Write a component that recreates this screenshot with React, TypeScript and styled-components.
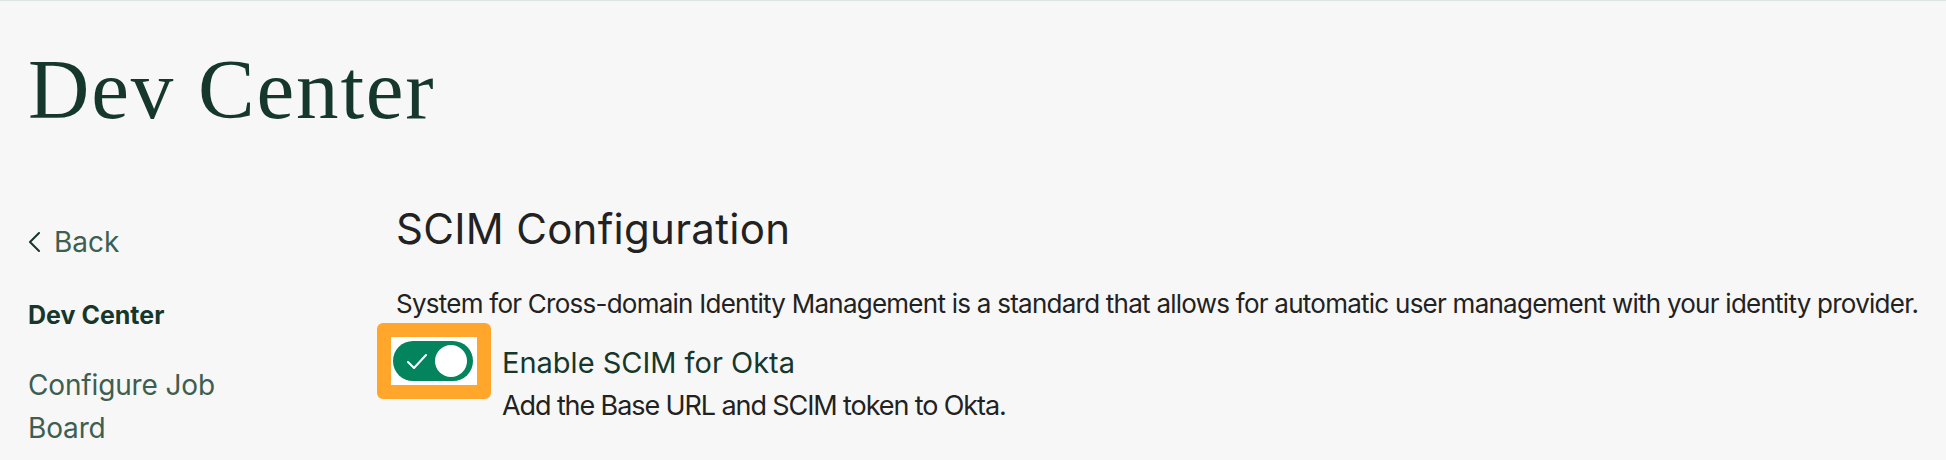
import React from 'react';
import styled, { createGlobalStyle } from 'styled-components';

const GlobalStyle = createGlobalStyle`
  html, body {
    margin: 0;
    padding: 0;
    background: #f7f7f7;
  }
  body {
    font-family: Inter, "Noto Sans", sans-serif;
  }
`;

const Page = styled.div`
  min-height: 460px;
  box-sizing: border-box;
  border-top: 1px solid #dde3e1;
  padding: 38px 28px 0 28px;
`;

const Title = styled.h1`
  margin: 0;
  font-family: "Liberation Serif", serif;
  font-weight: 400;
  font-size: 85px;
  line-height: 100px;
  letter-spacing: 1.8px;
  color: #15372c;
`;

const Body = styled.div`
  display: grid;
  grid-template-columns: 368px 1fr;
  margin-top: 64px;
`;

const Sidebar = styled.nav`
  display: flex;
  flex-direction: column;
  padding-top: 19px;
`;

const BackLink = styled.a`
  display: flex;
  align-items: center;
  gap: 14px;
  font-size: 28px;
  line-height: 40px;
  color: #3d5e50;
  text-decoration: none;
`;

const NavHeading = styled.div`
  margin-top: 36px;
  font-size: 25px;
  line-height: 34px;
  font-weight: 700;
  color: #15372c;
`;

const NavItem = styled.a`
  margin-top: 32px;
  width: 200px;
  font-size: 28px;
  line-height: 43px;
  letter-spacing: -0.15px;
  color: #3d5e50;
  text-decoration: none;
`;

const Main = styled.main`
  display: flex;
  flex-direction: column;
`;

const Heading = styled.h2`
  margin: 0;
  font-size: 42px;
  line-height: 52px;
  letter-spacing: 0.3px;
  font-weight: 400;
  color: #222222;
`;

const Description = styled.p`
  margin: 31px 0 0 0;
  font-size: 26px;
  line-height: 36px;
  letter-spacing: -0.75px;
  color: #222222;
  white-space: nowrap;
`;

const ToggleRow = styled.div`
  display: flex;
  align-items: flex-start;
  gap: 11px;
  margin-top: 1px;
  margin-left: -19px;
`;

const Highlight = styled.div`
  border: 14px solid #ffa62b;
  border-radius: 6px;
  background: #ffffff;
  padding: 4px 4px 4px 2px;
  flex-shrink: 0;
`;

const Track = styled.button<{ $on: boolean }>`
  position: relative;
  display: flex;
  align-items: center;
  width: 80px;
  height: 40px;
  padding: 0 0 0 14px;
  border: none;
  border-radius: 20px;
  background: ${p => (p.$on ? '#03845c' : '#9aa5a0')};
  cursor: pointer;
`;

const Knob = styled.span`
  position: absolute;
  top: 4px;
  right: 6px;
  width: 32px;
  height: 32px;
  border-radius: 50%;
  background: #ffffff;
`;

const ToggleText = styled.div`
  display: flex;
  flex-direction: column;
  padding-top: 21px;
`;

const ToggleLabel = styled.div`
  font-size: 29px;
  line-height: 38px;
  color: #15372c;
`;

const ToggleHint = styled.div`
  margin-top: 4px;
  font-size: 27px;
  line-height: 40px;
  letter-spacing: -1.1px;
  color: #222222;
`;

const Chevron = () => (
  <svg width="12" height="20" viewBox="0 0 12 20" fill="none">
    <path d="M11 1 L2 10 L11 19" stroke="#15372c" strokeWidth="2" strokeLinecap="round" strokeLinejoin="round" />
  </svg>
);

const Check = () => (
  <svg width="20" height="15" viewBox="0 0 20 15" fill="none">
    <path d="M1 8 L7 14 L19 1" stroke="#ffffff" strokeWidth="2" strokeLinecap="round" strokeLinejoin="round" />
  </svg>
);

export default function App() {
  return (
    <>
      <GlobalStyle />
      <Page>
        <Title>Dev Center</Title>
        <Body>
          <Sidebar>
            <BackLink href="#">
              <Chevron />
              Back
            </BackLink>
            <NavHeading>Dev Center</NavHeading>
            <NavItem href="#">Configure Job Board</NavItem>
          </Sidebar>
          <Main>
            <Heading>SCIM Configuration</Heading>
            <Description>
              System for Cross-domain Identity Management is a standard that allows for automatic user management with your identity provider.
            </Description>
            <ToggleRow>
              <Highlight>
                <Track $on={true} aria-label="Enable SCIM for Okta">
                  <Check />
                  <Knob />
                </Track>
              </Highlight>
              <ToggleText>
                <ToggleLabel>Enable SCIM for Okta</ToggleLabel>
                <ToggleHint>Add the Base URL and SCIM token to Okta.</ToggleHint>
              </ToggleText>
            </ToggleRow>
          </Main>
        </Body>
      </Page>
    </>
  );
}
